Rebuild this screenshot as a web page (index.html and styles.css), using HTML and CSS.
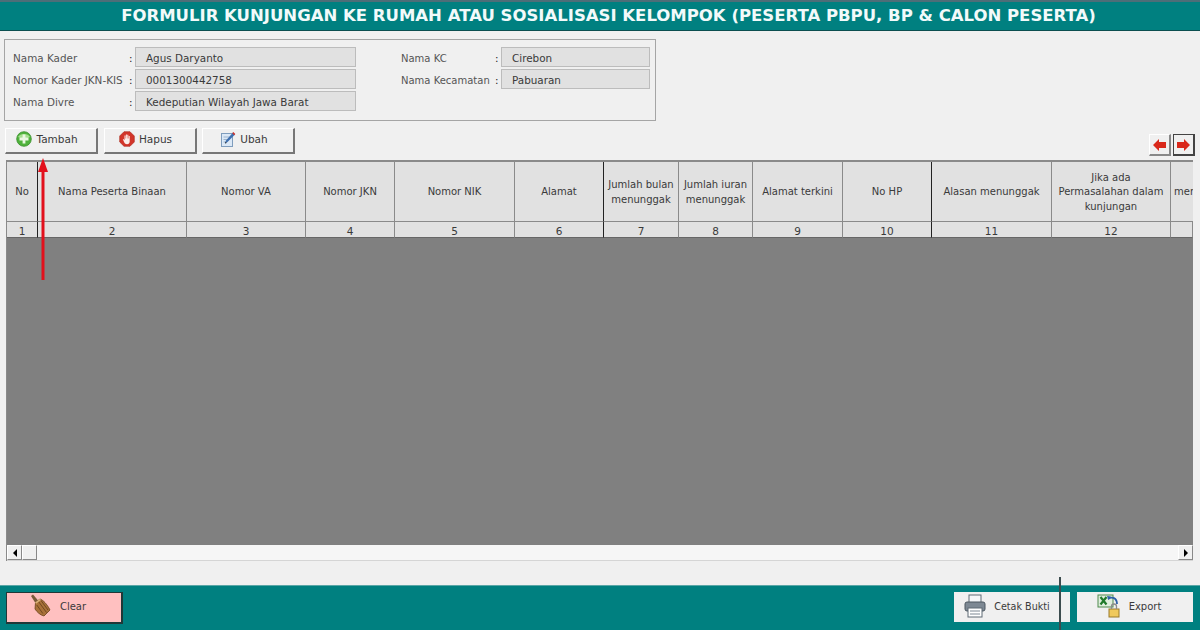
FILE: index.html
```html
<!DOCTYPE html>
<html>
<head>
<title>Formulir Kunjungan</title>
<link rel="stylesheet" href="styles.css">
</head>
<body>
<div class="page">
  <div class="title-bar">FORMULIR KUNJUNGAN KE RUMAH ATAU SOSIALISASI KELOMPOK (PESERTA PBPU, BP &amp; CALON PESERTA)</div>

  <div class="info-panel">
    <div class="info-group group-left">
      <span class="info-label">Nama Kader</span><span class="info-colon">:</span><span class="info-value">Agus Daryanto</span>
      <span class="info-label">Nomor Kader JKN-KIS</span><span class="info-colon">:</span><span class="info-value">0001300442758</span>
      <span class="info-label">Nama Divre</span><span class="info-colon">:</span><span class="info-value">Kedeputian Wilayah Jawa Barat</span>
    </div>
    <div class="info-group group-right">
      <span class="info-label">Nama KC</span><span class="info-colon">:</span><span class="info-value">Cirebon</span>
      <span class="info-label">Nama Kecamatan</span><span class="info-colon">:</span><span class="info-value">Pabuaran</span>
    </div>
  </div>

  <div class="toolbar">
    <button class="tool-btn">
      <svg width="16" height="16" viewBox="0 0 16 16"><circle cx="8" cy="8" r="7.3" fill="#4fb23c" stroke="#3a8f2c" stroke-width="0.8"/><path d="M2 6a6.500 5 0 0 1 12 0c-3 1.500-9 1.500-12 0z" fill="#a5e08f"/><path d="M6.600 3.500h2.800v3.100h3.100v2.800H9.400v3.100H6.600V9.400H3.500V6.600h3.100z" fill="#eaf7e2"/></svg>
      <span>Tambah</span>
    </button>
    <button class="tool-btn">
      <svg width="16" height="16" viewBox="0 0 16 16"><path d="M5 .7h6L15.300 5v6L11 15.300H5L.7 11V5z" fill="#d2352a" stroke="#a82318" stroke-width="0.6"/><path d="M3.800 8.200l1 .1.700 1V4.600h1v3h.4V3.400h1v4.200h.4V3.800h1v3.800h.4V5h1v5.500c0 1.600-1 2.700-2.700 2.700-1.400 0-2.100-.5-2.700-1.600z" fill="#fbeeea"/></svg>
      <span>Hapus</span>
    </button>
    <button class="tool-btn">
      <svg width="16" height="16" viewBox="0 0 16 16"><rect x="1.500" y="2.500" width="11" height="13" fill="#dbe8f6" stroke="#7f9dbd"/><path d="M3.500 6h6M3.500 8.500h4M3.500 11h3" stroke="#9db4cc"/><path d="M5 12.500l1-3L13 1.500l2 2L7.500 11z" fill="#3d6fb0"/><path d="M12.300 2.300l1-1.200 2 2-1.100 1.100z" fill="#d0342c"/><path d="M5 12.500l.6-1.700 1.100 1.100z" fill="#222"/></svg>
      <span>Ubah</span>
    </button>
    <div class="nav-btns">
      <button class="nav-btn">
        <svg width="15" height="14" viewBox="0 0 15 14"><path d="M1 7l6-6v3h7v6H7v3z" fill="#d9281a"/></svg>
      </button>
      <button class="nav-btn nav-active">
        <svg width="15" height="14" viewBox="0 0 15 14"><path d="M14 7L8 1v3H1v6h7v3z" fill="#d9281a"/></svg>
      </button>
    </div>
  </div>

  <div class="sheet">
    <div class="sheet-head">
      <div class="head-cell dark">No</div>
      <div class="head-cell">Nama Peserta Binaan</div>
      <div class="head-cell">Nomor VA</div>
      <div class="head-cell">Nomor JKN</div>
      <div class="head-cell">Nomor NIK</div>
      <div class="head-cell dark">Alamat</div>
      <div class="head-cell">Jumlah bulan menunggak</div>
      <div class="head-cell">Jumlah iuran menunggak</div>
      <div class="head-cell">Alamat terkini</div>
      <div class="head-cell dark">No HP</div>
      <div class="head-cell">Alasan menunggak</div>
      <div class="head-cell">Jika ada<br>Permasalahan dalam kunjungan</div>
      <div class="head-cell clipped">mer</div>
      <div class="num-cell dark">1</div>
      <div class="num-cell">2</div>
      <div class="num-cell">3</div>
      <div class="num-cell">4</div>
      <div class="num-cell">5</div>
      <div class="num-cell dark">6</div>
      <div class="num-cell">7</div>
      <div class="num-cell">8</div>
      <div class="num-cell">9</div>
      <div class="num-cell dark">10</div>
      <div class="num-cell">11</div>
      <div class="num-cell">12</div>
      <div class="num-cell"></div>
    </div>
    <div class="sheet-body"></div>
    <div class="scrollbar">
      <div class="scroll-btn"><span class="tri-left"></span></div>
      <div class="scroll-thumb"></div>
      <div class="scroll-track"></div>
      <div class="scroll-btn"><span class="tri-right"></span></div>
    </div>
  </div>

  <div class="footer">
    <button class="foot-btn btn-clear">
      <svg width="26" height="26" viewBox="0 0 26 26"><path d="M3 3l2-1.500 6 7-3 2.500z" fill="#7a5a3a"/><path d="M7.500 9.500l4.500-3.500c3 1 7 5 10 11l-6 6c-4-1-7-4-9-7z" fill="#a9713a" stroke="#6a431d" stroke-width="0.8"/><path d="M10.500 8.500l8 11M13 7.500l7 9.500M8.800 12l6 8.500" stroke="#6a431d" stroke-width="0.9"/><path d="M7 9.500l5-3.700 1 1.200-5 3.800z" fill="#d9b27c"/></svg>
      <span>Clear</span>
    </button>
    <div class="foot-right">
      <button class="foot-btn btn-print">
        <svg width="22" height="24" viewBox="0 0 22 24"><rect x="5" y="1" width="12" height="8" fill="#f4f6f8" stroke="#5e6a75"/><rect x="1" y="8" width="20" height="9" rx="2" fill="#7d8893" stroke="#4c5761"/><rect x="4" y="14" width="14" height="9" fill="#fff" stroke="#5e6a75"/><path d="M6 17h10M6 20h10" stroke="#7d8893"/></svg>
        <span>Cetak Bukti</span>
      </button>
      <button class="foot-btn btn-export">
        <svg width="24" height="24" viewBox="0 0 24 24"><rect x="1" y="1" width="15" height="12" fill="#dfeedd" stroke="#4e8a4c"/><path d="M3.500 3l6 7.500M9.500 3l-6 7.500" stroke="#1f7a2a" stroke-width="2.200"/><path d="M11 5c4-3 9-1 9 5" fill="none" stroke="#2c5fa8" stroke-width="1.800"/><path d="M10 2l4 .5-2.500 3.500z" fill="#2c5fa8"/><rect x="12" y="15" width="10" height="8" fill="#f0c95c" stroke="#9a7a2a"/><path d="M14.500 15v-2.500a2.500 2.500 0 0 1 5 0V15" fill="none" stroke="#8c8c8c" stroke-width="1.300"/></svg>
        <span>Export</span>
      </button>
    </div>
  </div>

  <svg class="red-arrow" width="12" height="122" viewBox="0 0 12 122"><path d="M6 122V10" stroke="#e2101c" stroke-width="3"/><path d="M6 0l5 14H1z" fill="#e2101c"/></svg>
  <div class="stray-line"></div>
</div>
</body>
</html>
```

FILE: styles.css
```css
body {
  margin: 0;
  padding: 0;
  background-color: #f0f0f0;
  font-family: "DejaVu Sans", sans-serif;
  font-size: 10px;
  color: #3a3a3a;
}

button {
  font-family: inherit;
  font-size: inherit;
  color: inherit;
  cursor: pointer;
}

.page {
  position: relative;
  display: flex;
  flex-direction: column;
  width: 1200px;
  height: 630px;
  overflow: hidden;
}

.title-bar {
  height: 28px;
  line-height: 28px;
  padding-left: 17px;
  border-top: 2px solid #4d6e78;
  border-bottom: 1px solid #0b4f50;
  background-color: #008080;
  color: #f2fafa;
  font-size: 16.5px;
  font-weight: bold;
  text-align: center;
  white-space: nowrap;
}

.info-panel {
  display: flex;
  box-sizing: border-box;
  width: 652px;
  height: 82px;
  margin: 8px 0 0 4px;
  padding: 7px 5px 0 8px;
  border: 1px solid #a5a5a5;
  font-size: 10.4px;
}

.info-group {
  display: grid;
  grid-auto-rows: 20px;
  row-gap: 2px;
  align-items: center;
}

.group-left {
  grid-template-columns: 116px 6px 221px;
}

.group-right {
  grid-template-columns: 94px 6px 149px;
  margin-left: 45px;
}

.group-right .info-label {
  font-size: 10px;
}

.info-label {
  padding-top: 2px;
  color: #555;
  white-space: nowrap;
}

.info-colon {
  padding-top: 2px;
  color: #222;
}

.info-value {
  box-sizing: border-box;
  height: 20px;
  line-height: 21px;
  padding-left: 10px;
  border: 1px solid #bcbcbc;
  background-color: #e1e1e1;
  color: #3a3a3a;
}

.toolbar {
  display: flex;
  gap: 5.5px;
  height: 28px;
  margin: 7px 5px 0 5px;
  font-size: 10.5px;
}

.tool-btn {
  display: flex;
  align-items: center;
  justify-content: center;
  gap: 4px;
  width: 93px;
  height: 26px;
  padding: 0 8px 3px 0;
  border: 1px solid;
  border-color: #fff #777 #777 #fff;
  border-width: 1px 2px 2px 1px;
  background-color: #f0f0f0;
}

.nav-btns {
  display: flex;
  align-self: flex-end;
  gap: 2px;
  margin-left: auto;
}

.nav-btn {
  display: flex;
  align-items: center;
  justify-content: center;
  box-sizing: border-box;
  width: 22px;
  height: 22px;
  padding: 0;
  border: 1px solid;
  border-color: #fff #888 #888 #fff;
  border-width: 1px 2px 2px 1px;
  background-color: #f0f0f0;
}

.nav-active {
  border-color: #444;
}

.sheet {
  display: flex;
  flex-direction: column;
  box-sizing: border-box;
  width: 1187px;
  height: 401px;
  margin: 4px 0 0 6px;
  border-top: 2px solid #8a8a8a;
  border-left: 1px solid #8a8a8a;
}

.sheet-head {
  display: grid;
  grid-template-columns: 31px 149px 119px 89px 120px 89px 75px 74px 90px 89px 120px 119px 22px;
  grid-template-rows: 60px 16px;
  background-color: #e1e1e1;
}

.head-cell,
.num-cell {
  display: flex;
  align-items: center;
  justify-content: center;
  box-sizing: border-box;
  border-right: 1px solid #8a8a8a;
  text-align: center;
  overflow: hidden;
}

.head-cell {
  display: block;
  align-content: center;
  padding: 2px 2px 0;
  line-height: 14.5px;
  border-bottom: 1px solid #8a8a8a;
}

.num-cell {
  padding-top: 2px;
  border-bottom: 1px solid #666;
  font-size: 10.5px;
}

.dark {
  border-right-color: #222;
}

.clipped {
  padding: 2px 0 0 3px;
  border-right: none;
  text-align: left;
}

.sheet-body {
  flex: 1;
  background-color: #808080;
}

.scrollbar {
  display: flex;
  box-sizing: border-box;
  height: 16px;
  border-bottom: 1px solid #d5d5d5;
  background-color: #f6f6f6;
}

.scroll-btn,
.scroll-thumb {
  display: flex;
  align-items: center;
  justify-content: center;
  box-sizing: border-box;
  width: 15px;
  border: 1px solid;
  border-color: #fff #888 #888 #fff;
  background-color: #f0f0f0;
}

.scroll-track {
  flex: 1;
}

.tri-left,
.tri-right {
  width: 0;
  height: 0;
  border-top: 4px solid transparent;
  border-bottom: 4px solid transparent;
}

.tri-left {
  border-right: 4px solid #000;
}

.tri-right {
  border-left: 4px solid #000;
}

.footer {
  display: flex;
  align-items: flex-start;
  justify-content: space-between;
  box-sizing: border-box;
  height: 45px;
  margin-top: auto;
  padding: 6px 7px 0 6px;
  border-top: 1px solid #5aa6a6;
  background-color: #008080;
}

.foot-right {
  display: flex;
  gap: 7px;
}

.foot-btn {
  display: flex;
  align-items: center;
  justify-content: center;
  gap: 8px;
  box-sizing: border-box;
  width: 116px;
  height: 30px;
  padding: 0 0 2px 0;
  border: none;
  background-color: #f0f0f0;
}

.btn-print {
  padding-right: 10px;
  font-size: 9.6px;
}

.btn-export {
  padding-right: 12px;
}

.btn-clear {
  gap: 6px;
  width: 117px;
  height: 32px;
  padding: 0 14px 3px 0;
  border: 1px solid #203838;
  border-width: 1px 2px 2px 1px;
  background-color: #ffc0c0;
}

.red-arrow {
  position: absolute;
  left: 37px;
  top: 158px;
}

.stray-line {
  position: absolute;
  left: 1059px;
  top: 577px;
  width: 2px;
  height: 53px;
  background-color: #3c4c4e;
}
```
